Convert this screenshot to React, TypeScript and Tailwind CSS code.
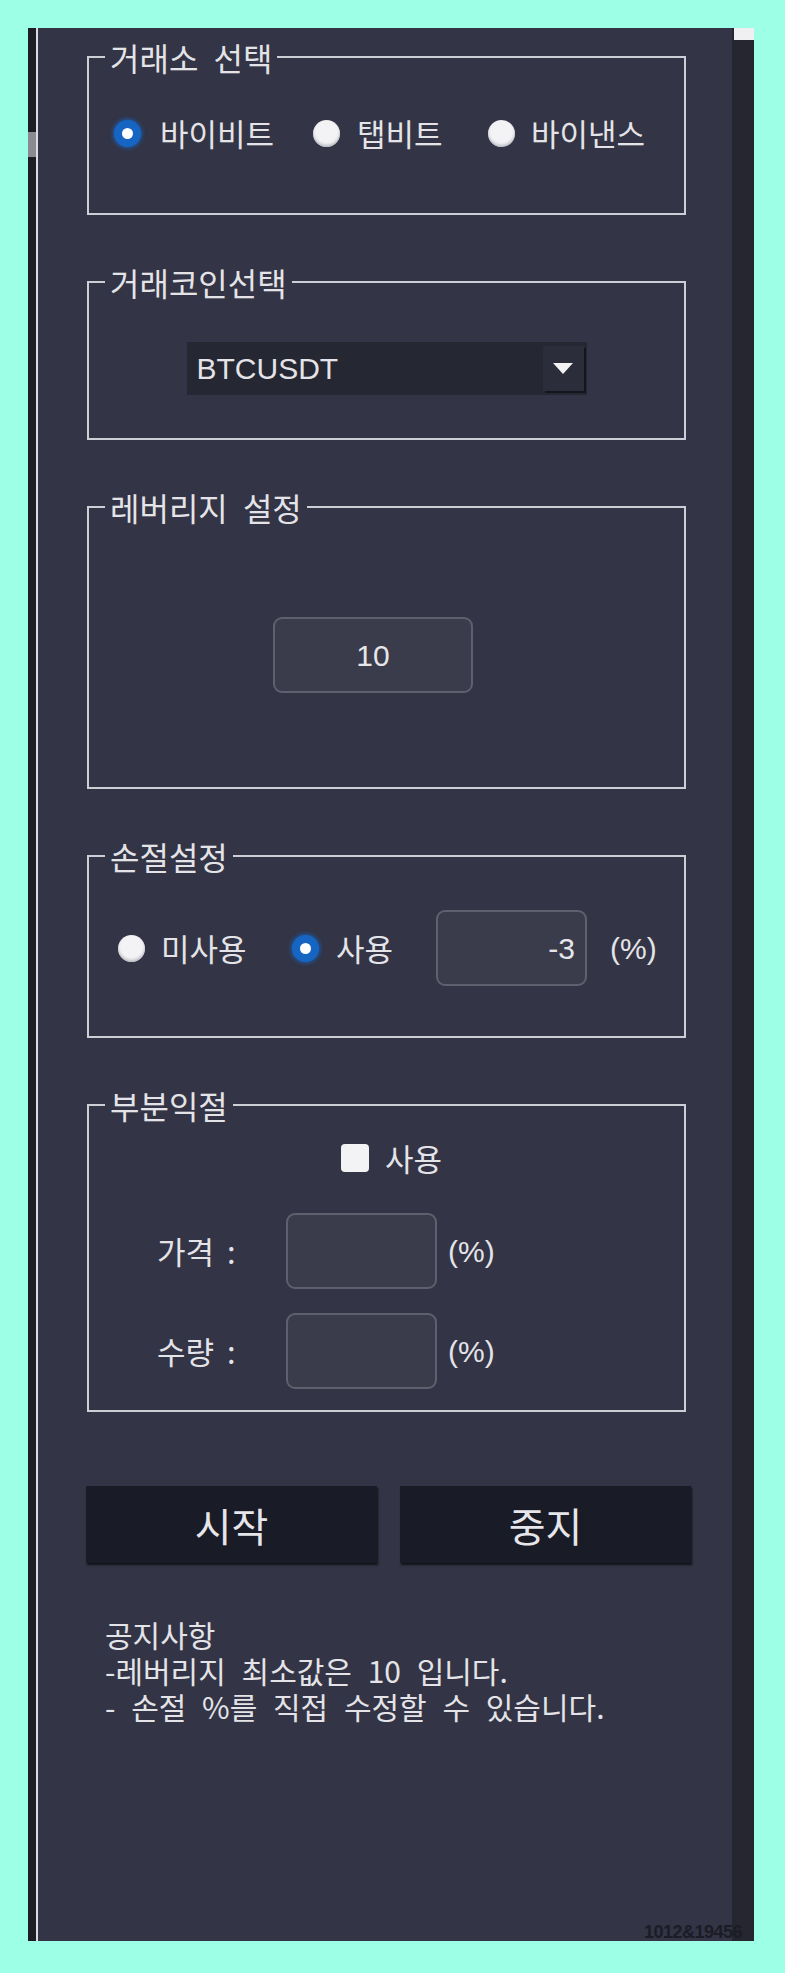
import React from 'react';

const kr = "font-['Noto_Sans_CJK_KR','Noto_Sans',sans-serif]";
const latin = "font-['Liberation_Sans','Noto_Sans_CJK_KR',sans-serif]";

const Radio = ({ checked }: { checked?: boolean }) =>
  checked ? (
    <span className="w-[27px] h-[27px] shrink-0 rounded-full bg-[#1765c2] shadow-[0_0_4px_1px_#1b5cab] flex items-center justify-center">
      <span className="w-[11px] h-[11px] rounded-full bg-white" />
    </span>
  ) : (
    <span className="w-[27px] h-[27px] shrink-0 rounded-full bg-[#f3f3f5] shadow-[inset_0_-2px_3px_#b9bac2]" />
  );

const Group = ({
  title,
  className,
  children,
}: {
  title: string;
  className: string;
  children: React.ReactNode;
}) => (
  <fieldset className="w-[599px] ml-[49px] border-2 border-[#cdced6]">
    <legend className="ml-[16px] px-[5px] text-[32px] leading-[32px] text-[#e4e4e8] [word-spacing:8px]">{title}</legend>
    <div className={className}>{children}</div>
  </fieldset>
);

const Field = ({ value, align = 'center', w }: { value?: string; align?: 'center' | 'right'; w: string }) => (
  <div
    className={`${w} h-[76px] shrink-0 rounded-[9px] border-2 border-[#5f606d] bg-[#3a3b4b] flex items-center ${
      align === 'right' ? 'justify-end pr-[10px]' : 'justify-center'
    } ${latin} text-[30px] text-[#e6e6ea]`}
  >
    {value}
  </div>
);

const App = () => {
  return (
    <div className={`min-h-[1973px] bg-[#9dffe6] pt-[28px] pl-[28px] ${kr}`}>
      <div className="relative w-[726px] h-[1913px] flex">
        {/* left frame edge */}
        <div className="w-[8px] bg-[#1d1e25] flex flex-col">
          <div className="mt-[104px] h-[25px] bg-[#8a8b92]" />
        </div>
        <div className="w-[2px] bg-[#dcdce0]" />

        <div className="flex-1 bg-[#333445] pt-[13px] flex flex-col">
          {/* 거래소 선택 */}
          <Group title="거래소 선택" className="h-[140px] pb-[20px] pl-[25px] flex items-center text-[31px] text-[#e4e4e8]">
            <div className="w-[199px] flex items-center gap-[19px]">
              <Radio checked />
              <span>바이비트</span>
            </div>
            <div className="w-[175px] flex items-center gap-[17px]">
              <Radio />
              <span>탭비트</span>
            </div>
            <div className="flex items-center gap-[16px]">
              <Radio />
              <span>바이낸스</span>
            </div>
          </Group>

          {/* 거래코인선택 */}
          <div className="mt-[51px]">
            <Group title="거래코인선택" className="h-[140px] flex items-center justify-center">
              <div className="w-[400px] h-[53px] bg-[#252733] flex items-center justify-between pl-[10px] pr-[3px]">
                <span className={`${latin} text-[30px] text-[#e4e4e8]`}>BTCUSDT</span>
                <div className="w-[41px] h-[45px] bg-[#2b2d3b] shadow-[2px_2px_0_#15161d] flex items-center justify-center">
                  <svg width="20" height="11" viewBox="0 0 20 11">
                    <polygon points="0,0 20,0 10,11" fill="#f2f2f4" />
                  </svg>
                </div>
              </div>
            </Group>
          </div>

          {/* 레버리지 설정 */}
          <div className="mt-[51px]">
            <Group title="레버리지 설정" className="h-[264px] pl-[184px] flex items-center">
              <Field value="10" w="w-[200px]" />
            </Group>
          </div>

          {/* 손절설정 */}
          <div className="mt-[51px]">
            <Group title="손절설정" className="h-[164px] pb-[12px] pl-[29px] flex items-center text-[31px] text-[#e4e4e8]">
              <div className="w-[174px] flex items-center gap-[16px]">
                <Radio />
                <span>미사용</span>
              </div>
              <div className="w-[144px] flex items-center gap-[17px]">
                <Radio checked />
                <span>사용</span>
              </div>
              <Field value="-3" align="right" w="w-[151px]" />
              <span className={`ml-[23px] ${latin} text-[30px]`}>(%)</span>
            </Group>
          </div>

          {/* 부분익절 */}
          <div className="mt-[51px]">
            <Group title="부분익절" className="h-[289px] pt-[23px] flex flex-col text-[31px] text-[#e4e4e8]">
              <div className="flex items-center gap-[16px] pl-[252px] h-[28px]">
                <span className="w-[28px] h-[28px] rounded-[4px] bg-[#f3f3f5]" />
                <span>사용</span>
              </div>
              <div className="flex items-center pl-[68px] mt-[41px]">
                <span className="w-[129px] [word-spacing:6px]">가격 :</span>
                <Field w="w-[151px]" />
                <span className={`ml-[11px] ${latin} text-[30px]`}>(%)</span>
              </div>
              <div className="flex items-center pl-[68px] mt-[24px]">
                <span className="w-[129px] [word-spacing:6px]">수량 :</span>
                <Field w="w-[151px]" />
                <span className={`ml-[11px] ${latin} text-[30px]`}>(%)</span>
              </div>
            </Group>
          </div>

          {/* 시작 / 중지 */}
          <div className="ml-[48px] w-[605px] mt-[74px] flex gap-[23px]">
            <button className="flex-1 h-[77px] bg-[#191b27] shadow-[1px_2px_2px_#121319] text-[40px] text-[#e6e6ea]">시작</button>
            <button className="flex-1 h-[77px] bg-[#191b27] shadow-[1px_2px_2px_#121319] text-[40px] text-[#e6e6ea]">중지</button>
          </div>

          {/* 공지사항 */}
          <div className="ml-[67px] mt-[53px] text-[30px] leading-[36px] text-[#e4e4e8] [word-spacing:9px]">
            <p>공지사항</p>
            <p>-레버리지 최소값은 10 입니다.</p>
            <p>- 손절 %를 직접 수정할 수 있습니다.</p>
          </div>
        </div>

        {/* right scrollbar strip */}
        <div className="w-[22px] bg-[#25262f] flex flex-col">
          <div className="ml-[2px] w-[20px] h-[12px] bg-[#f0f0f2]" />
        </div>

        <span className={`absolute right-[12px] bottom-0 ${latin} font-bold text-[18px] leading-[18px] tracking-[-0.5px] text-[#1b1c26]`}>
          1012&amp;19456
        </span>
      </div>
    </div>
  );
};

export default App;
